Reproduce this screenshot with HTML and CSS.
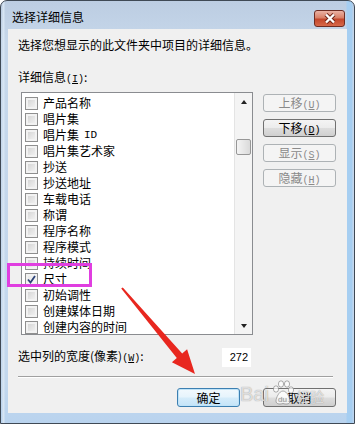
FILE: index.html
```html
<!DOCTYPE html>
<html lang="zh-CN">
<head>
	<meta charset="UTF-8">
	<title>选择详细信息</title>
	<link rel="stylesheet" href="styles.css">
</head>
<body>
	<div class="window">
		<div class="titlebar">
			<span class="title">选择详细信息</span>
			<span class="close">
				<svg width="14" height="11" viewBox="0 0 14 11">
					<path d="M3 1.5 L11 9.5 M11 1.5 L3 9.5" stroke="#6e2418" stroke-width="4.2" fill="none"/>
					<path d="M3 1.5 L11 9.5 M11 1.5 L3 9.5" stroke="#fff" stroke-width="2.4" fill="none"/>
				</svg>
			</span>
		</div>
		<div class="client">
			<p class="desc">选择您想显示的此文件夹中项目的详细信息。</p>
			<p class="caption">详细信息<span class="key">(<u>I</u>)</span>:</p>
			<div class="main">
				<div class="listbox">
					<ul class="items">
						<li><span class="check"></span>产品名称</li>
						<li><span class="check"></span>唱片集</li>
						<li><span class="check"></span>唱片集 <span class="latin">ID</span></li>
						<li><span class="check"></span>唱片集艺术家</li>
						<li><span class="check"></span>抄送</li>
						<li><span class="check"></span>抄送地址</li>
						<li><span class="check"></span>车载电话</li>
						<li><span class="check"></span>称谓</li>
						<li><span class="check"></span>程序名称</li>
						<li><span class="check"></span>程序模式</li>
						<li><span class="check"></span>持续时间</li>
						<li><span class="check checked">
							<svg width="11" height="11" viewBox="0 0 11 11"><path d="M2 5.5 L4.5 8.5 L9 2" stroke="#2d4378" stroke-width="1.8" fill="none"/></svg>
						</span>尺寸</li>
						<li><span class="check"></span>初始调性</li>
						<li><span class="check"></span>创建媒体日期</li>
						<li><span class="check"></span>创建内容的时间</li>
					</ul>
					<div class="scrollbar">
						<span class="sb-btn"><span class="tri up"></span></span>
						<span class="thumb"></span>
						<span class="sb-btn bottom"><span class="tri down"></span></span>
					</div>
				</div>
				<div class="side">
					<button class="btn" disabled>上移<span class="key">(<u>U</u>)</span></button>
					<button class="btn">下移<span class="key">(<u>D</u>)</span></button>
					<button class="btn" disabled>显示<span class="key">(<u>S</u>)</span></button>
					<button class="btn" disabled>隐藏<span class="key">(<u>H</u>)</span></button>
				</div>
			</div>
			<div class="width-row">
				<label class="width-label">选中列的宽度(像素)<span class="key">(<u>W</u>)</span>:</label>
				<span class="field">272</span>
			</div>
			<div class="sep"></div>
			<div class="actions">
				<button class="btn ok">确定</button>
				<button class="btn cancel">取消</button>
			</div>
		</div>
	</div>

	<!-- annotations drawn over the screenshot -->
	<div class="mark"></div>
	<svg class="arrow" width="355" height="424" viewBox="0 0 355 424">
		<polygon points="122.8,287.4 182.2,353.4 187.1,349.2 195,374 171.9,362.2 176.8,358 121.2,288.6" fill="#e8271f"/>
	</svg>
	<div class="watermark">
		<span class="wm-bai">Bai</span>
		<svg class="paw" width="24" height="26" viewBox="0 0 24 26">
			<g fill="rgba(255,255,255,.75)" stroke="rgba(110,110,110,.55)" stroke-width="1">
				<ellipse cx="5" cy="9" rx="2.6" ry="3.2"/>
				<ellipse cx="10" cy="4" rx="2.6" ry="3.2"/>
				<ellipse cx="16" cy="4" rx="2.6" ry="3.2"/>
				<ellipse cx="20" cy="10" rx="2.6" ry="3.2"/>
				<path d="M12 11 C8 11 5 18 5 21 C5 24 8 24.5 12 23.5 C16 24.5 19 24 19 21 C19 18 16 11 12 11 Z"/>
			</g>
			<text x="7" y="22" font-size="8" font-family="Liberation Sans, sans-serif" fill="rgba(120,120,120,.6)">du</text>
		</svg>
		<span class="wm-jy">经验</span>
	</div>
</body>
</html>
```

FILE: styles.css
```css
body{
	margin: 0;
	position: relative;
	background: #fff;
	font: 12px/16px "Noto Sans CJK SC", sans-serif;
	color: #000;
}
p{
	margin: 0;
}
.key{
	font-family: "Liberation Mono", monospace;
	font-size: 10px;
}
.latin{
	font-family: "Liberation Mono", monospace;
	font-size: 11px;
}
.window{
	width: 355px;
	height: 424px;
	box-sizing: border-box;
	border: 1px solid #3f4955;
	border-radius: 7px 7px 0 0;
	padding: 0 7px 10px;
	display: flex;
	flex-direction: column;
	background:
		linear-gradient(to right, transparent 345px, #a6cef1 346px, #a6cef1 351px, transparent 352px),
		linear-gradient(to right, transparent 1px, #d7e5f3 2px, #d7e5f3 3px, transparent 4px),
		linear-gradient(to bottom, #bccde2, #c6d7ea 40px, #c3d8ee 380px, #b9d3ee);
}
.titlebar{
	height: 28px;
	box-sizing: border-box;
	padding: 8px 2px 0 4px;
	display: flex;
	align-items: flex-start;
	justify-content: space-between;
}
.title{
	line-height: 16px;
}
.close{
	width: 31px;
	height: 17px;
	margin-top: 1px;
	box-sizing: border-box;
	border: 1px solid #6e2c22;
	border-radius: 3px;
	background: linear-gradient(#eab2a4, #d98068 45%, #c3472c 55%, #d7694a);
	display: flex;
	align-items: center;
	justify-content: center;
}
.client{
	flex: 1;
	background: #f0f0f0;
	padding: 8px 11px 0 10px;
}
.desc{
	margin-bottom: 16px;
}
.caption{
	margin-bottom: 4px;
}
.main{
	display: flex;
	align-items: flex-start;
}
.listbox{
	width: 232px;
	height: 243px;
	margin-left: 3px;
	box-sizing: border-box;
	border: 1px solid #8a8c90;
	background: #fff;
	display: flex;
}
.items{
	list-style: none;
	margin: 0;
	padding: 2px 0 0 3px;
	flex: 1;
	overflow: hidden;
}
.items li{
	height: 16px;
	display: flex;
	align-items: center;
	gap: 5px;
	white-space: nowrap;
}
.check{
	flex: none;
	width: 13px;
	height: 13px;
	box-sizing: border-box;
	border: 1px solid #8f8f8f;
	background: linear-gradient(135deg, #cfcfcf, #f7f7f7);
	box-shadow: inset 0 0 0 2px #f2f2f2;
	display: flex;
	align-items: center;
	justify-content: center;
}
.check.checked{
	background: linear-gradient(135deg, #e4e4e4, #fbfbfb);
}
.scrollbar{
	width: 18px;
	box-sizing: border-box;
	border-left: 1px solid #e4e4e4;
	background: #f4f4f4;
	display: flex;
	flex-direction: column;
	align-items: center;
}
.sb-btn{
	height: 17px;
	width: 100%;
	display: flex;
	align-items: center;
	justify-content: center;
}
.sb-btn.bottom{
	margin-top: auto;
}
.tri{
	width: 0;
	height: 0;
	border-left: 3.5px solid transparent;
	border-right: 3.5px solid transparent;
}
.tri.up{
	border-bottom: 4px solid #222;
}
.tri.down{
	border-top: 4px solid #222;
}
.thumb{
	width: 15px;
	height: 16px;
	margin-top: 29px;
	box-sizing: border-box;
	border: 1px solid #979797;
	border-radius: 2px;
	background: linear-gradient(to right, #f4f4f4, #dadada);
}
.side{
	margin-left: 10px;
	padding-top: 2px;
	display: flex;
	flex-direction: column;
	gap: 7px;
}
.btn{
	width: 73px;
	height: 18px;
	box-sizing: border-box;
	padding: 0;
	border: 1px solid #707070;
	border-radius: 3px;
	background: linear-gradient(#f4f4f4, #ececec 48%, #dddddd 52%, #cfcfcf);
	font: 12px/16px "Noto Sans CJK SC", sans-serif;
	color: #000;
}
.btn:disabled{
	border-color: #adb2b5;
	background: #f4f4f4;
	color: #8a8a8a;
}
.width-row{
	margin-top: 13px;
	height: 19px;
	display: flex;
	align-items: center;
}
.width-label{
	width: 204px;
}
.field{
	width: 29px;
	height: 19px;
	box-sizing: border-box;
	padding-right: 3px;
	background: #fff;
	text-align: right;
	font: 11px/19px "Liberation Sans", sans-serif;
}
.sep{
	width: 315px;
	margin-top: 9px;
	border-top: 1px solid #a0a0a0;
	border-bottom: 1px solid #fff;
}
.actions{
	margin-top: 10px;
	display: flex;
	justify-content: flex-end;
	gap: 23px;
}
.actions .btn{
	height: 19px;
}
.btn.ok{
	width: 63px;
	border-color: #3c7fb1;
	box-shadow: inset 0 0 0 1px #bfe3f8;
	background: linear-gradient(#f2f9fd, #e6f4fc 48%, #d5ecfa 52%, #c4e4f8);
}
.mark{
	position: absolute;
	left: 7px;
	top: 263px;
	width: 85px;
	height: 24px;
	box-sizing: border-box;
	border: 3px solid #e03ee0;
}
.arrow{
	position: absolute;
	left: 0;
	top: 0;
	pointer-events: none;
}
.watermark{
	position: absolute;
	left: 240px;
	top: 380px;
	display: flex;
	align-items: flex-end;
	color: rgba(255,255,255,.7);
	text-shadow: 0 0 1px rgba(90,90,90,.7);
}
.wm-bai{
	font: 20px/24px "Liberation Sans", sans-serif;
}
.paw{
	margin: 0 1px 0 2px;
}
.wm-jy{
	font: 14px/20px "Noto Sans CJK SC", sans-serif;
}
```
